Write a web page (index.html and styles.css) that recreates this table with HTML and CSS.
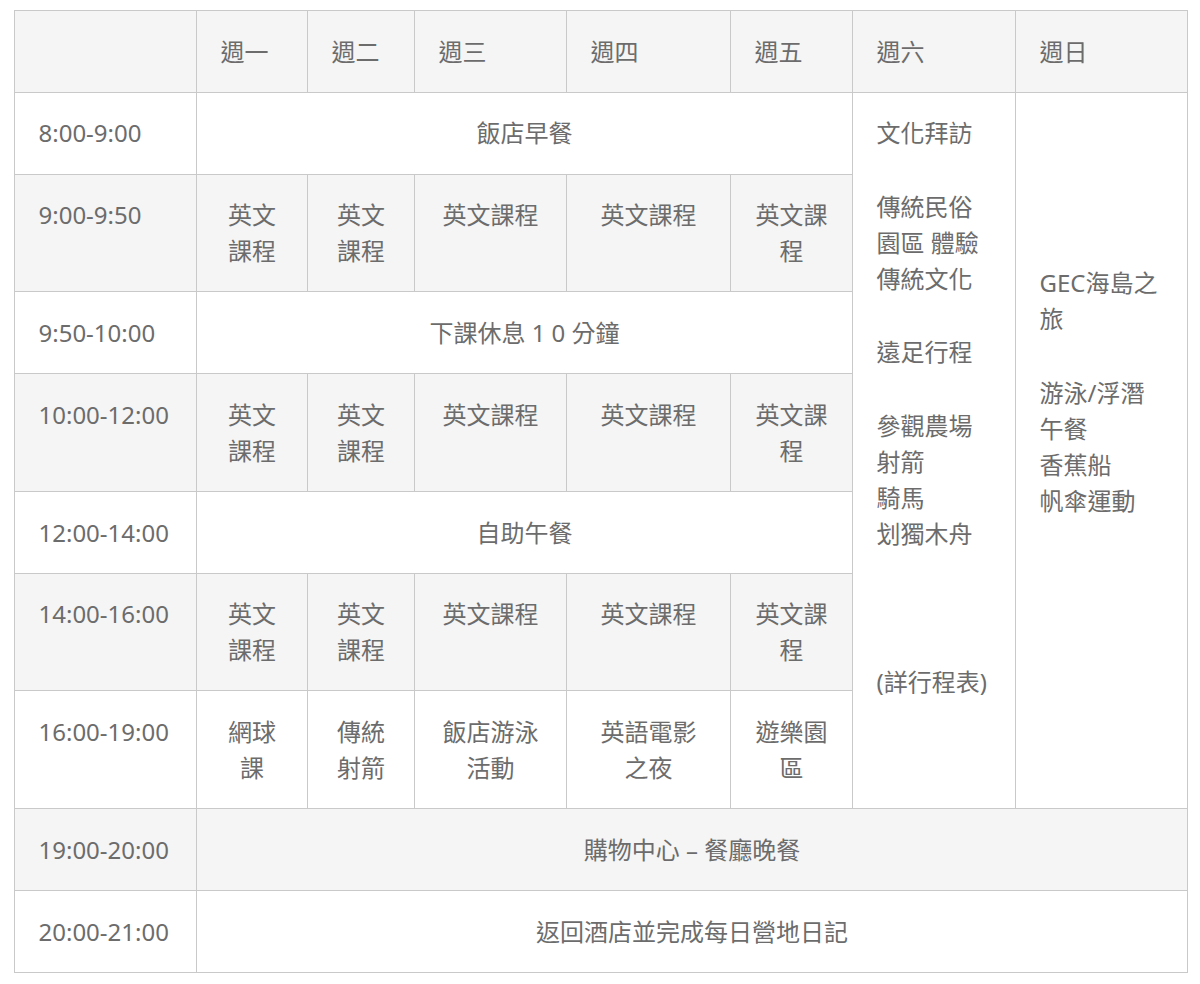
FILE: index.html
```html
<!DOCTYPE html>
<html lang="zh-Hant">
<head>
<meta charset="utf-8">
<title>課程表</title>
<link rel="stylesheet" href="styles.css">
</head>
<body>
<div class="page">
  <table class="schedule">
    <colgroup>
      <col class="c-time">
      <col class="c-mon">
      <col class="c-tue">
      <col class="c-wed">
      <col class="c-thu">
      <col class="c-fri">
      <col class="c-sat">
      <col class="c-sun">
    </colgroup>
    <thead>
      <tr>
        <th></th>
        <th>週一</th>
        <th>週二</th>
        <th>週三</th>
        <th>週四</th>
        <th>週五</th>
        <th>週六</th>
        <th>週日</th>
      </tr>
    </thead>
    <tbody>
      <tr>
        <td class="time">8:00-9:00</td>
        <td class="act" colspan="5">飯店早餐</td>
        <td class="side" rowspan="7">
          <p>文化拜訪</p>
          <p class="gap"></p>
          <p>傳統民俗</p>
          <p>園區 體驗</p>
          <p>傳統文化</p>
          <p class="gap"></p>
          <p>遠足行程</p>
          <p class="gap"></p>
          <p>參觀農場</p>
          <p>射箭</p>
          <p>騎馬</p>
          <p>划獨木舟</p>
          <p class="gap"></p>
          <p class="gap"></p>
          <p class="gap"></p>
          <p>(詳行程表)</p>
        </td>
        <td class="side" rowspan="7">
          <p class="gap"></p>
          <p class="gap"></p>
          <p class="gap"></p>
          <p class="gap"></p>
          <p>GEC海島之旅</p>
          <p class="gap"></p>
          <p>游泳/浮潛</p>
          <p>午餐</p>
          <p>香蕉船</p>
          <p>帆傘運動</p>
        </td>
      </tr>
      <tr>
        <td class="time">9:00-9:50</td>
        <td class="act">英文課程</td>
        <td class="act">英文課程</td>
        <td class="act">英文課程</td>
        <td class="act">英文課程</td>
        <td class="act">英文課程</td>
      </tr>
      <tr>
        <td class="time">9:50-10:00</td>
        <td class="act" colspan="5">下課休息 1 0 分鐘</td>
      </tr>
      <tr>
        <td class="time">10:00-12:00</td>
        <td class="act">英文課程</td>
        <td class="act">英文課程</td>
        <td class="act">英文課程</td>
        <td class="act">英文課程</td>
        <td class="act">英文課程</td>
      </tr>
      <tr>
        <td class="time">12:00-14:00</td>
        <td class="act" colspan="5">自助午餐</td>
      </tr>
      <tr>
        <td class="time">14:00-16:00</td>
        <td class="act">英文課程</td>
        <td class="act">英文課程</td>
        <td class="act">英文課程</td>
        <td class="act">英文課程</td>
        <td class="act">英文課程</td>
      </tr>
      <tr>
        <td class="time">16:00-19:00</td>
        <td class="act">網球課</td>
        <td class="act">傳統射箭</td>
        <td class="act">飯店游泳活動</td>
        <td class="act">英語電影之夜</td>
        <td class="act">遊樂園區</td>
      </tr>
      <tr>
        <td class="time">19:00-20:00</td>
        <td class="act" colspan="7">購物中心 – 餐廳晚餐</td>
      </tr>
      <tr>
        <td class="time">20:00-21:00</td>
        <td class="act" colspan="7">返回酒店並完成每日營地日記</td>
      </tr>
    </tbody>
  </table>
</div>
</body>
</html>
```

FILE: styles.css
```css
html, body {
  margin: 0;
  padding: 0;
  background: #ffffff;
}

.page {
  padding: 10px 13px 0 14px;
}

.schedule {
  width: 1173px;
  table-layout: fixed;
  border-collapse: collapse;
  font-family: "Noto Sans", "Noto Sans CJK TC", sans-serif;
  font-size: 24px;
  line-height: 36px;
  color: #6c6c6c;
}

.c-time { width: 182px; }
.c-mon { width: 111px; }
.c-tue { width: 107px; }
.c-wed { width: 152px; }
.c-thu { width: 164px; }
.c-fri { width: 122px; }
.c-sat { width: 163px; }
.c-sun { width: 172px; }

.schedule th,
.schedule td {
  border: 1px solid #c9c9c9;
  padding: 22.6px 23.5px 22.2px;
  vertical-align: top;
  text-align: left;
  font-weight: 400;
}

.schedule thead tr {
  background: #f5f5f5;
}

.schedule tbody tr:nth-child(even) {
  background: #f5f5f5;
}

.schedule td.act {
  text-align: center;
}

.schedule td.side {
  background: #ffffff;
}

.side p {
  margin: 0;
}

.side p.gap {
  height: 37.5px;
}
```
